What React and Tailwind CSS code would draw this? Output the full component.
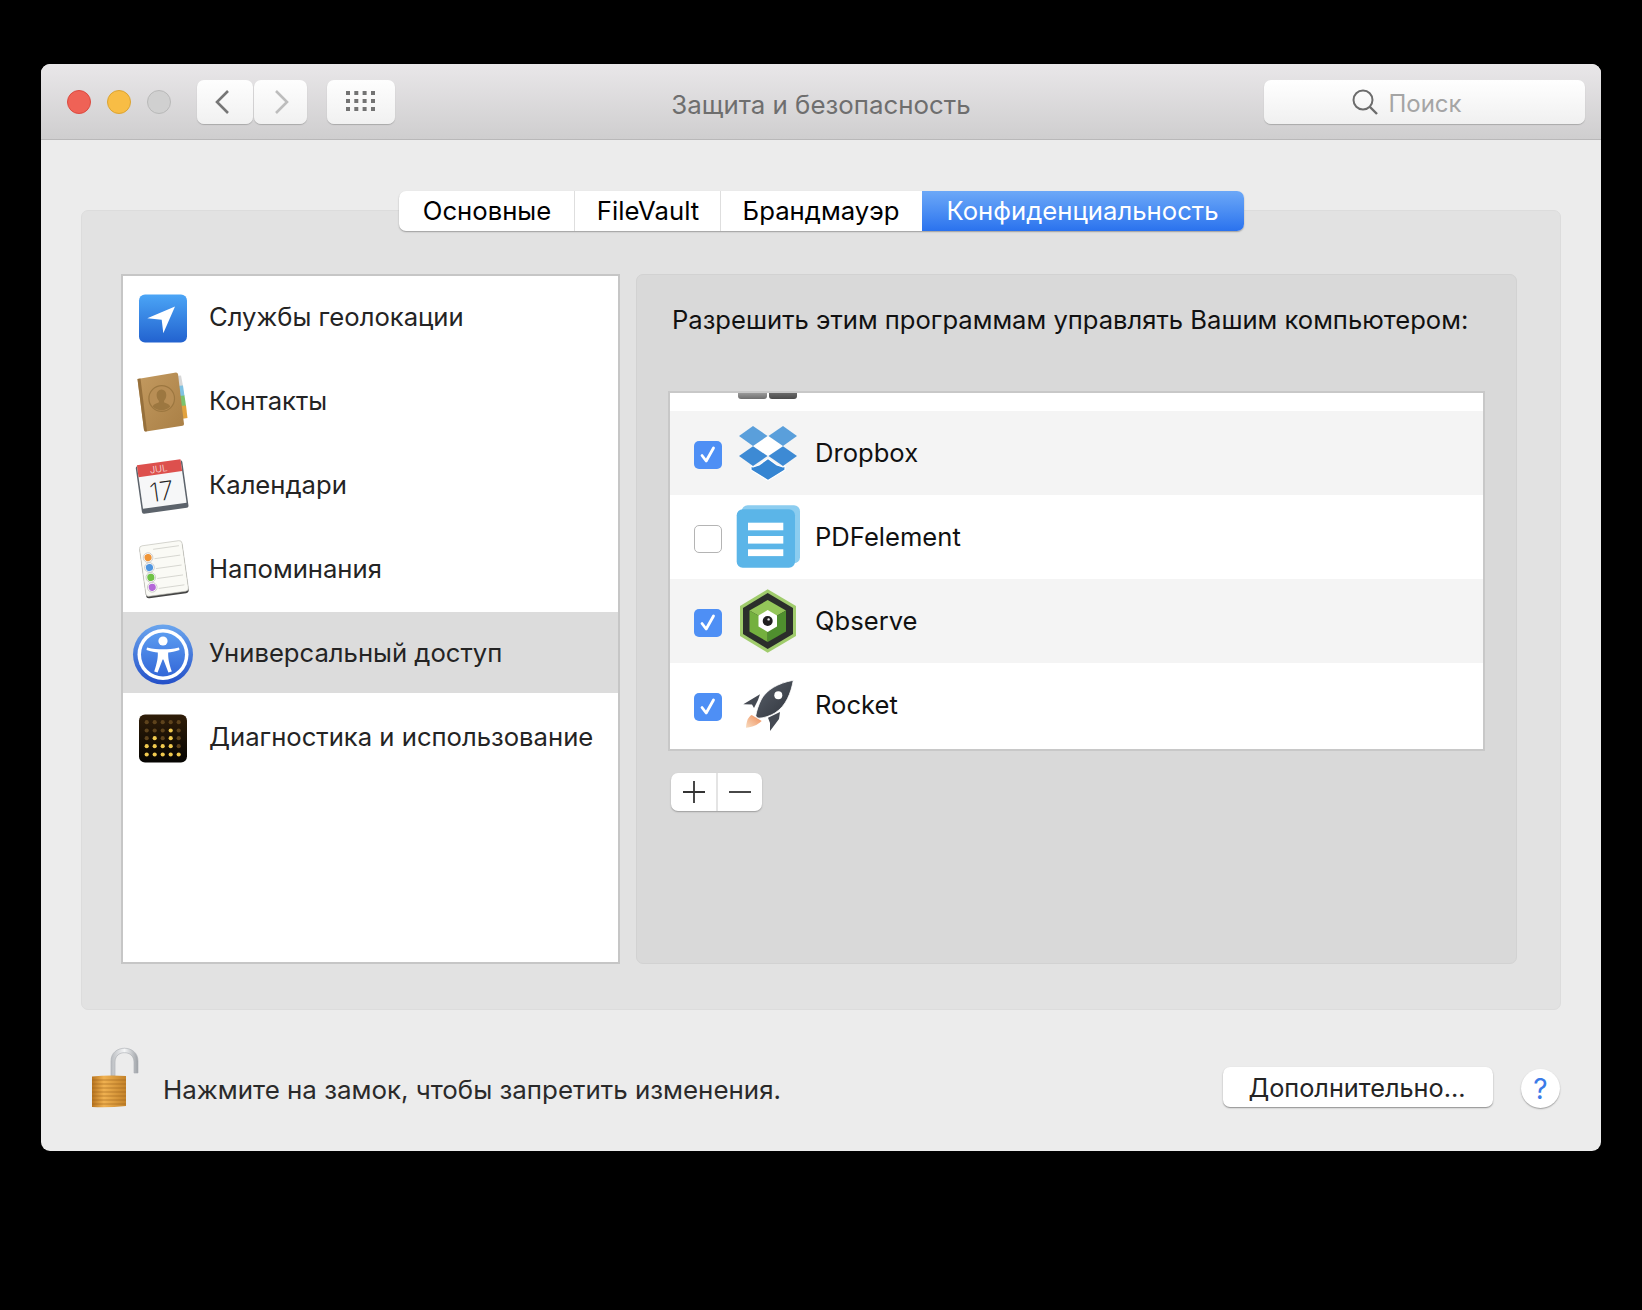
import React from "react";

const Loc = () => (
  <svg width="64" height="64" viewBox="0 0 64 64">
    <defs><linearGradient id="locg" x1="0" y1="0" x2="0" y2="1"><stop offset="0" stopColor="#4ba5f6"/><stop offset="1" stopColor="#2262cf"/></linearGradient></defs>
    <rect x="8" y="9.5" width="48" height="48" rx="6" fill="url(#locg)"/>
    <path d="M44 21.5 L16.3 33.2 L30.7 34.8 L32.3 48.2 Z" fill="#fff"/>
  </svg>
);
const Contacts = () => (
  <svg width="64" height="64" viewBox="0 0 64 64">
    <defs><linearGradient id="cong" x1="0" y1="0" x2="1" y2="1"><stop offset="0" stopColor="#c39a60"/><stop offset="1" stopColor="#a97f45"/></linearGradient></defs>
    <path d="M44 7 L50 6.5 L52 17 L46 18 Z" fill="#d8d8d8"/>
    <path d="M45.5 17 L52 16.5 L53.5 27 L47 28 Z" fill="#80c2e2"/>
    <path d="M47 27 L53.5 26.5 L55 37 L48.5 38 Z" fill="#7cc26c"/>
    <path d="M48.5 37 L55 36.5 L56.5 49 L50 50 Z" fill="#e2a23e"/>
    <path d="M6.5 10 L45 3.5 Q46.5 3.5 47 5 L53 55 Q53 56.5 51.5 56.8 L15 62.5 Q13.5 62.5 13 61 Z" fill="url(#cong)"/>
    <path d="M6.5 10 L9.5 9.5 L16 62 L15 62.5 Q13.5 62.5 13 61 Z" fill="#96703c"/>
    <circle cx="30.7" cy="29.5" r="12.8" fill="#b88e55" stroke="#9c7740" strokeWidth="1.2"/>
    <path d="M30.5 20.5 a4.8 5.5 0 0 1 4.8 5.5 c0 3 -1.5 5 -2.4 6 l0.3 1.6 c2.6 1 5.2 2 6 3.8 a12 12 0 0 1 -17.5 0 c0.8 -1.8 3.4 -2.8 6 -3.8 l0.3 -1.6 c-1 -1 -2.4 -3 -2.4 -6 a4.8 5.5 0 0 1 4.9 -5.5z" fill="#9c7740"/>
  </svg>
);
const Calendar = () => (
  <svg width="64" height="64" viewBox="0 0 64 64">
    <g transform="rotate(-8 31 33)">
      <rect x="7.5" y="10" width="47" height="48" rx="2" fill="#5c636b"/>
      <rect x="9" y="9" width="44" height="44" fill="#f6f7f8"/>
      <rect x="9" y="9" width="44" height="12" fill="#dd504d"/>
      <text x="30" y="19" fontSize="9.5" fill="#f8e4e4" fontWeight="300" fontFamily="Inter, sans-serif" textAnchor="middle">JUL</text>
      <text x="30" y="47.5" fontSize="26" fill="#222" fontWeight="200" fontFamily="Inter, sans-serif" textAnchor="middle">17</text>
    </g>
  </svg>
);
const Reminders = () => (
  <svg width="64" height="64" viewBox="0 0 64 64">
    <g transform="rotate(-8 33 32)">
      <rect x="11.5" y="7.5" width="43" height="51.5" rx="3" fill="#444"/>
      <rect x="11.5" y="6" width="43" height="51" rx="3" fill="#fafaf5" stroke="#bdbdb5" strokeWidth="0.6"/>
      {[[18.5,"#ef9537"],[28.5,"#4f96e0"],[38.5,"#6fc246"],[48.5,"#b468d8"]].map(([y,c])=>(
        <g key={y}>
          <circle cx="18.8" cy={y} r="4.8" fill="#fff" stroke="#bbb" strokeWidth="0.7"/>
          <circle cx="18.8" cy={y} r="3.6" fill={c}/>
          <line x1="25" x2="51" y1={y+2} y2={y+2} stroke="#d0d0ca" strokeWidth="0.8"/>
        </g>
      ))}
      <line x1="25" x2="51" y1="11" y2="11" stroke="#d0d0ca" strokeWidth="0.8"/>
    </g>
  </svg>
);
const Access = () => (
  <svg width="64" height="64" viewBox="0 0 64 64">
    <defs>
      <linearGradient id="accO" x1="0" y1="0" x2="0" y2="1"><stop offset="0" stopColor="#6aa5ee"/><stop offset="1" stopColor="#2450c8"/></linearGradient>
      <linearGradient id="accI" x1="0" y1="0" x2="0" y2="1"><stop offset="0" stopColor="#5c9cf0"/><stop offset="1" stopColor="#3367d8"/></linearGradient>
    </defs>
    <circle cx="32" cy="33.5" r="30" fill="url(#accO)"/>
    <circle cx="32" cy="33.5" r="25.5" fill="#fff"/>
    <circle cx="32" cy="33.5" r="22" fill="url(#accI)"/>
    <circle cx="32" cy="20" r="4.6" fill="#fff"/>
    <path d="M16 26.5 C22 28 27 28.3 32 28.3 C37 28.3 42 28 48 26.5 L48.5 29 C44 30.5 40 31.3 37.2 31.5 C37 36 37.6 41 40.8 50.5 L37.4 51.5 L32.4 38.5 L31.6 38.5 L26.6 51.5 L23.2 50.5 C26.4 41 27 36 26.8 31.5 C24 31.3 20 30.5 15.5 29 Z" fill="#fff"/>
  </svg>
);
const Diag = () => {
  const xs = [15.7, 23.7, 31.7, 39.7, 47.7];
  const ys = [17.2, 25.5, 33.2, 41.2, 49.5];
  const on = { "1-3": 1, "2-1": 1, "2-3": 1, "3-0": 1, "3-1": 1, "3-2": 1, "3-3": 1, "4-0": 1, "4-1": 1, "4-2": 1, "4-3": 1, "4-4": 1 };
  return (
    <svg width="64" height="64" viewBox="0 0 64 64">
      <defs><linearGradient id="dg" x1="0" y1="0" x2="0" y2="1"><stop offset="0" stopColor="#2f1d08"/><stop offset="1" stopColor="#050402"/></linearGradient></defs>
      <rect x="8" y="9.5" width="48" height="48" rx="6" fill="url(#dg)"/>
      {ys.map((y, r) => xs.map((x, c) => (
        <circle key={r + "-" + c} cx={x} cy={y} r="2.1" fill={on[r + "-" + c] ? "#f0c94e" : "#5e431c"}/>
      )))}
    </svg>
  );
};
const Dropbox = () => (
  <svg width="64" height="64" viewBox="0 0 64 64">
    <path d="M32 15 L17 25 L32 35 L47 25 Z" fill="#fff"/>
    <path d="M3 15 L17 5 L31.5 15 L17 25 Z" fill="#5a9fdb"/>
    <path d="M32.5 15 L47 5 L61 15 L47 25 Z" fill="#5a9fdb"/>
    <path d="M3 35 L17 25.3 L31.5 35 L17 45 Z" fill="#3d8ad4"/>
    <path d="M32.5 35 L47 25.3 L61 35 L47 45 Z" fill="#3d8ad4"/>
    <path d="M32 37.5 L41 44 L47 46 L49 45 L49 49 L32 59.5 L15 49 L15 45 L17 46 L23 44 Z" fill="#3585d2" stroke="#fff" strokeWidth="1.2" strokeLinejoin="round"/>
  </svg>
);
const Pdf = () => (
  <svg width="64" height="64" viewBox="0 0 64 64" className="overflow-visible">
    <rect x="5.7" y="0.3" width="58.3" height="58" rx="6" fill="#8ccdf0"/>
    <rect x="0.7" y="4.3" width="58.3" height="58.4" rx="6" fill="#5bb5e8"/>
    <rect x="12" y="17.7" width="35.3" height="7.6" fill="#fff"/>
    <rect x="12" y="31" width="35.3" height="7.6" fill="#fff"/>
    <rect x="12" y="44.3" width="35.3" height="6.8" fill="#fff"/>
  </svg>
);
const Qbserve = () => (
  <svg width="64" height="64" viewBox="0 0 64 64">
    <path d="M31.7 0.3 L60 17 L60 47 L31.7 63.7 L4 47 L4 17 Z" fill="#a0cc6c"/>
    <path d="M31.7 4 L57 19 L57 45 L31.7 60 L7 45 L7 19 Z" fill="#2b2e2b"/>
    <path d="M31.7 11 L50 21.5 L31.7 32 L13.5 21.5 Z" fill="#94c659"/>
    <path d="M13.5 21.5 L31.7 32 L31.7 53 L13.5 42.5 Z" fill="#74b03e"/>
    <path d="M50 21.5 L31.7 32 L31.7 53 L50 42.5 Z" fill="#4f8f2e"/>
    <path d="M31.7 21 L41 26.5 L41 37.5 L31.7 43 L22.5 37.5 L22.5 26.5 Z" fill="#fff"/>
    <circle cx="31.7" cy="32" r="5" fill="#1f1f1f"/>
    <circle cx="32.6" cy="30.4" r="1.2" fill="#eee"/>
  </svg>
);
const Rocket = () => (
  <svg width="64" height="64" viewBox="0 0 64 64">
    <defs>
      <linearGradient id="rg" x1="0" y1="0" x2="1" y2="1"><stop offset="0" stopColor="#5a606a"/><stop offset="1" stopColor="#2f343c"/></linearGradient>
      <linearGradient id="fg" x1="0" y1="1" x2="1" y2="0"><stop offset="0" stopColor="#f8dcc0"/><stop offset="1" stopColor="#ee8a55"/></linearGradient>
    </defs>
    <path d="M10 54.7 C10.5 48 12 44 15.7 42 L25.7 48 C21 52.5 16 54 10 54.7 Z" fill="url(#fg)"/>
    <path d="M7.3 31.3 L24 21.3 L22 27 L18 35 L16 31.5 Z" fill="#454a53"/>
    <path d="M32 44.7 L44 39 L43 46 L34 58 L34 50 Z" fill="#454a53"/>
    <path d="M57.3 7.3 C42 10 30 17 25 27 C22.5 32 20.5 38 19.8 42.5 C20 43.5 21 45 23 45.2 C28 45 34 43 39 40 C50 33 55 20 57.3 7.3 Z" fill="url(#rg)" stroke="#fff" strokeWidth="0.8"/>
    <circle cx="42.3" cy="22.3" r="4" fill="#fff"/>
  </svg>
);
const Lock = () => (
  <svg width="54" height="65" viewBox="0 0 54 65" className="shrink-0">
    <defs>
      <linearGradient id="shk" x1="0" y1="0" x2="1" y2="0"><stop offset="0" stopColor="#b9bcc0"/><stop offset="0.5" stopColor="#f5f6f7"/><stop offset="1" stopColor="#9da1a6"/></linearGradient>
      <linearGradient id="lck" x1="0" y1="0" x2="1" y2="0"><stop offset="0" stopColor="#b8741f"/><stop offset="0.35" stopColor="#f0b150"/><stop offset="1" stopColor="#c4832a"/></linearGradient>
    </defs>
    <path d="M27 31 L27 17 C27 4.5 46 4.5 46 17 L46 28 L50 28 L50 16 C50 -1 23 -1 23 16 L23 31 Z" fill="url(#shk)" stroke="#a9adb2" strokeWidth="0.6"/>
    <path d="M4 31.5 Q20 30 38 31 L38 61 Q20 63 4 62 Z" fill="url(#lck)"/>
    {[35,39,43,47,51,55,59].map(y=>(<line key={y} x1="4" x2="38" y1={y} y2={y} stroke="#9a601c" strokeOpacity="0.55" strokeWidth="1"/>))}
  </svg>
);

const Check = () => (
  <span className="w-[28px] h-[28px] shrink-0 mt-[3px] rounded-[5px] bg-[#4e8ff5] flex items-center justify-center">
    <svg width="20" height="20" viewBox="0 0 20 20"><path d="M4 10.5 L8.2 16 L15.5 3" fill="none" stroke="#fff" strokeWidth="2.8" strokeLinecap="round" strokeLinejoin="round"/></svg>
  </span>
);
const Empty = () => (
  <span className="w-[28px] h-[28px] shrink-0 mt-[3px] rounded-[5px] bg-white border border-[#b4b4b4]" />
);

const rows = [
  ["Службы геолокации", Loc, false],
  ["Контакты", Contacts, false],
  ["Календари", Calendar, false],
  ["Напоминания", Reminders, false],
  ["Универсальный доступ", Access, true],
  ["Диагностика и использование", Diag, false],
];
const apps = [
  ["Dropbox", Dropbox, true, true],
  ["PDFelement", Pdf, false, false],
  ["Qbserve", Qbserve, true, true],
  ["Rocket", Rocket, true, false],
];

export default function App() {
  return (
    <div className="bg-black min-h-[1310px] pt-[64px] pl-[41px] font-['Inter','Noto_Sans',sans-serif]">
      <div className="w-[1560px] h-[1087px] rounded-[9px] overflow-hidden bg-[#ececec] flex flex-col">
        <div className="h-[76px] shrink-0 border-b-[1.5px] border-[#b9b8b9] bg-gradient-to-b from-[#e9e7e9] to-[#cfcecf] grid grid-cols-[1fr_auto_1fr] items-center px-[16px]">
          <div className="flex items-center pl-[10px]">
            <span className="w-[24px] h-[24px] rounded-full bg-[#ef6256] border border-[#dc4a40]" />
            <span className="w-[24px] h-[24px] rounded-full bg-[#f8bd45] border border-[#dca432] ml-[16px]" />
            <span className="w-[24px] h-[24px] rounded-full bg-[#d0d0d0] border border-[#b9b9b9] ml-[16px]" />
            <button className="ml-[26px] w-[56px] h-[44px] rounded-[7px] bg-gradient-to-b from-[#fefefe] to-[#f1f1f1] shadow-[0_1px_1px_#a9a9a9] flex items-center justify-center">
              <svg width="20" height="28" viewBox="0 0 20 28"><path d="M13 3 L2 14 L13 25" fill="none" stroke="#767676" strokeWidth="2.6"/></svg>
            </button>
            <button className="ml-[1px] w-[53px] h-[44px] rounded-[7px] bg-gradient-to-b from-[#fefefe] to-[#f1f1f1] shadow-[0_1px_1px_#a9a9a9] flex items-center justify-center">
              <svg width="20" height="28" viewBox="0 0 20 28"><path d="M5 3 L16 14 L5 25" fill="none" stroke="#bdbdbd" strokeWidth="2.6"/></svg>
            </button>
            <button className="ml-[20px] w-[68px] h-[44px] rounded-[7px] bg-gradient-to-b from-[#fefefe] to-[#f1f1f1] shadow-[0_1px_1px_#a9a9a9] flex items-center justify-center">
              <svg width="30" height="21" viewBox="0 0 30 21" fill="#737373">
                {[0,8,16].map(y=>[0,8.3,16.6,25].map(x=>(<rect key={x+"-"+y} x={x} y={y} width="4" height="4"/>)))}
              </svg>
            </button>
          </div>
          <div className="text-[25.85px] text-[#6e6e6e] pt-[8px]">Защита и безопасность</div>
          <div className="flex justify-end">
            <div className="w-[321px] h-[44px] rounded-[7px] bg-gradient-to-b from-[#ffffff] to-[#f0f0f0] shadow-[0_1px_1px_#a9a9a9] flex items-center justify-center gap-[9px] pr-[36px]">
              <svg width="28" height="28" viewBox="0 0 28 28" fill="none" stroke="#6c6c6c"><circle cx="12" cy="12" r="9.5" strokeWidth="2"/><path d="M19 19 L26 26" strokeWidth="2.4"/></svg>
              <span className="text-[24px] text-[#a5a5a5] pt-[4px]">Поиск</span>
            </div>
          </div>
        </div>

        <div className="relative z-10 flex justify-center mt-[51px] h-[40px] shrink-0">
          <div className="flex rounded-[7px] overflow-hidden bg-white shadow-[0_1px_1.5px_#9c9c9c] text-[25.7px] text-black">
            <div className="w-[176px] flex items-center justify-center border-r border-[#dedede] pl-[2px]">Основные</div>
            <div className="w-[146px] flex items-center justify-center border-r border-[#dedede] pl-[2px]">FileVault</div>
            <div className="w-[201px] flex items-center justify-center">Брандмауэр</div>
            <div className="w-[322px] flex items-center justify-center text-white bg-gradient-to-b from-[#6ca8f7] to-[#2a72ee]">Конфиденциальность</div>
          </div>
        </div>

        <div className="ml-[40px] w-[1480px] h-[800px] -mt-[21px] rounded-[7px] bg-[#e2e2e2] border border-[#dcdcdc] pt-[63px] pl-[39px] flex gap-[16px] shrink-0">
          <div className="w-[499px] h-[690px] bg-white border-2 border-[#c6c6c6] flex flex-col gap-[3px]">
            {rows.map(([t, I, sel]) => (
              <div key={t} className={"h-[81px] shrink-0 flex items-center pl-[8px] gap-[14px] " + (sel ? "bg-[#dcdcdc]" : "")}>
                <span className="w-[64px] h-[64px] shrink-0"><I /></span>
                <span className="text-[25.65px] text-[#242424] whitespace-nowrap pt-[2px]">{t}</span>
              </div>
            ))}
          </div>
          <div className="w-[881px] h-[690px] rounded-[7px] bg-[#d9d9d9] border border-[#d2d2d2] pl-[31px]">
            <div className="pt-[26px] pl-[4px] h-[116px] text-[25.6px] text-[#111] whitespace-nowrap">Разрешить этим программам управлять Вашим компьютером:</div>
            <div className="w-[817px] h-[360px] bg-white border-2 border-[#c8c8c8]">
              <div className="h-[18px] pl-[68px] flex gap-[2px] items-start">
                <span className="w-[29px] h-[6px] rounded-b-[3px] bg-gradient-to-b from-[#9a9a9a] to-[#6e6e6e]" />
                <span className="w-[28px] h-[6px] rounded-b-[3px] bg-gradient-to-b from-[#6a6a6a] to-[#4a4a4a]" />
              </div>
              {apps.map(([t, I, on, stripe]) => (
                <div key={t} className={"h-[84px] flex items-center pl-[24px] " + (stripe ? "bg-[#f4f4f4]" : "bg-white")}>
                  {on ? <Check /> : <Empty />}
                  <span className="w-[64px] h-[64px] shrink-0 ml-[14px]"><I /></span>
                  <span className="ml-[15px] text-[25.6px] text-[#111]">{t}</span>
                </div>
              ))}
            </div>
            <div className="mt-[22px] ml-[3px] w-[91px] h-[38px] flex rounded-[7px] bg-white shadow-[0_1px_1.5px_#9c9c9c]">
              <div className="w-[47px] flex items-center justify-center border-r-2 border-[#e4e4e4]">
                <svg width="24" height="24" viewBox="0 0 24 24"><path d="M1 12 H23 M12 1 V23" stroke="#333" strokeWidth="1.8"/></svg>
              </div>
              <div className="flex-1 flex items-center justify-center">
                <svg width="24" height="24" viewBox="0 0 24 24"><path d="M1 12 H23" stroke="#333" strokeWidth="1.8"/></svg>
              </div>
            </div>
          </div>
        </div>

        <div className="flex items-start mt-[35px] pl-[47px]">
          <Lock />
          <div className="ml-[21px] mt-[25px] h-[40px] flex items-center text-[25.9px] text-[#2a2a2a] whitespace-nowrap">Нажмите на замок, чтобы запретить изменения.</div>
          <div className="ml-auto flex items-start mt-[22px] pr-[41px]">
            <button className="w-[270px] h-[40px] rounded-[7px] bg-white shadow-[0_1px_1.5px_#8c8c8c] text-[25.3px] text-[#242424] flex items-center justify-center pt-[1px] pr-[2px]">Дополнительно...</button>
            <div className="ml-[28px] mt-[2px] w-[39px] h-[39px] rounded-full bg-white shadow-[0_1px_1.5px_#9c9c9c] flex items-center justify-center text-[#3b7be8] text-[28px]">?</div>
          </div>
        </div>
      </div>
    </div>
  );
}
